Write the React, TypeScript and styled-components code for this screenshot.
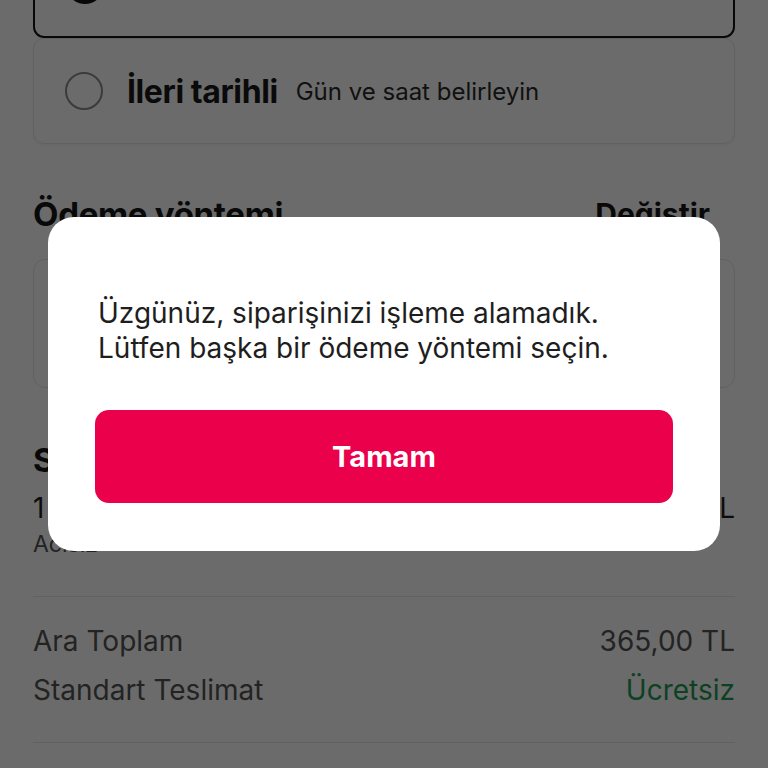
import React from 'react';
import styled, {createGlobalStyle} from 'styled-components';

const GlobalStyle = createGlobalStyle`
  html, body {
    margin: 0;
    padding: 0;
    background: #ffffff;
    font-family: Inter, 'Noto Sans', sans-serif;
  }
  #root {
    height: 768px;
    overflow: hidden;
  }
`;

type Option = {title: string; hint: string; selected: boolean};

const options: Option[] = [
  {title: 'Hemen', hint: 'En kısa sürede', selected: true},
  {title: 'İleri tarihli', hint: 'Gün ve saat belirleyin', selected: false},
];

const App: React.FC = () => {
  return (
    <>
      <GlobalStyle />
      <Page>
        <OptionGroup>
          {options.map(o => (
            <OptionRow key={o.title} $selected={o.selected}>
              <Radio $selected={o.selected} />
              <OptionTitle>{o.title}</OptionTitle>
              <OptionHint>{o.hint}</OptionHint>
            </OptionRow>
          ))}
        </OptionGroup>

        <SectionHeader>
          <SectionTitle>Ödeme yöntemi</SectionTitle>
          <LinkButton>Değiştir</LinkButton>
        </SectionHeader>
        <PaymentCard>
          <PaymentLabel>Kredi / Banka Kartı</PaymentLabel>
        </PaymentCard>

        <SummaryTitle>Sipariş özeti</SummaryTitle>
        <ItemRow>
          <ItemName>1 x Karışık Pizza</ItemName>
          <ItemName>365,00 TL</ItemName>
        </ItemRow>
        <ItemNote>Acısız</ItemNote>

        <Divider />
        <TotalsBlock>
          <TotalRow>
            <TotalLabel>Ara Toplam</TotalLabel>
            <TotalLabel>365,00 TL</TotalLabel>
          </TotalRow>
          <TotalRow>
            <TotalLabel>Standart Teslimat</TotalLabel>
            <FreeLabel>Ücretsiz</FreeLabel>
          </TotalRow>
        </TotalsBlock>
        <Divider />
      </Page>

      <Backdrop>
        <Dialog role="alertdialog">
          <Message>
            Üzgünüz, siparişinizi işleme alamadık.
            <br />
            Lütfen başka bir ödeme yöntemi seçin.
          </Message>
          <PrimaryButton>Tamam</PrimaryButton>
        </Dialog>
      </Backdrop>
    </>
  );
};

export default App;

const Page = styled.div`
  display: flex;
  flex-direction: column;
  padding: 0 33px;
  margin-top: -68px;
`;

const OptionGroup = styled.div`
  display: flex;
  flex-direction: column;
`;

const OptionRow = styled.div<{$selected: boolean}>`
  display: flex;
  align-items: center;
  gap: 24px;
  height: 106px;
  box-sizing: border-box;
  padding: 0 31px;
  border-radius: 11px;
  border: ${p => (p.$selected ? '2px solid #141414' : '1px solid #e6e6e6')};
  ${p => !p.$selected && 'box-shadow: 0 2px 3px rgba(0,0,0,0.04);'}
`;

const Radio = styled.span<{$selected: boolean}>`
  width: 38px;
  height: 38px;
  box-sizing: border-box;
  border-radius: 50%;
  flex-shrink: 0;
  border: ${p => (p.$selected ? '11px solid #141414' : '2.5px solid #8c8c8c')};
`;

const OptionTitle = styled.span`
  font-size: 32px;
  font-weight: 700;
  color: #1a1a1a;
  letter-spacing: -0.4px;
`;

const OptionHint = styled.span`
  font-size: 24px;
  color: #2a2a2a;
  margin-left: -6px;
`;

const SectionHeader = styled.div`
  display: flex;
  justify-content: space-between;
  align-items: center;
  margin-top: 50px;
  padding-right: 25px;
  height: 40px;
`;

const SectionTitle = styled.h2`
  margin: 0;
  font-size: 33px;
  font-weight: 700;
  color: #161616;
  letter-spacing: -0.3px;
`;

const LinkButton = styled.span`
  font-size: 30px;
  font-weight: 700;
  color: #161616;
`;

const PaymentCard = styled.div`
  margin-top: 25px;
  height: 127px;
  border: 1px solid #e6e6e6;
  border-radius: 12px;
  display: flex;
  align-items: center;
  padding: 0 30px;
`;

const PaymentLabel = styled.span`
  font-size: 26px;
  color: #222;
`;

const SummaryTitle = styled.h2`
  margin: 52px 0 0;
  font-size: 33px;
  line-height: 40px;
  font-weight: 700;
  color: #161616;
`;

const ItemRow = styled.div`
  display: flex;
  justify-content: space-between;
  margin-top: 10px;
`;

const ItemName = styled.span`
  font-size: 28px;
  line-height: 36px;
  color: #1e1e1e;
`;

const ItemNote = styled.span`
  font-size: 23px;
  line-height: 28px;
  color: #555;
  margin-top: 4px;
`;

const Divider = styled.hr`
  border: none;
  border-top: 1px solid #e8e8e8;
  margin: 38px 0 0;
  width: 100%;
`;

const TotalsBlock = styled.div`
  display: flex;
  flex-direction: column;
  gap: 13px;
  margin: 26px 0 -4px;
`;

const TotalRow = styled.div`
  display: flex;
  justify-content: space-between;
`;

const TotalLabel = styled.span`
  font-size: 28px;
  line-height: 36px;
  color: #555;
`;

const FreeLabel = styled(TotalLabel)`
  color: #1f9c57;
`;

const Backdrop = styled.div`
  position: fixed;
  inset: 0;
  background: rgba(0, 0, 0, 0.58);
  display: flex;
  align-items: center;
  justify-content: center;
`;

const Dialog = styled.div`
  width: 672px;
  box-sizing: border-box;
  background: #fff;
  border-radius: 26px;
  padding: 79px 47px 48px;
  display: flex;
  flex-direction: column;
`;

const Message = styled.p`
  margin: 0 0 44px 3px;
  font-size: 28px;
  line-height: 35px;
  color: #1e1e1e;
`;

const PrimaryButton = styled.button`
  height: 93px;
  border: none;
  border-radius: 14px;
  background: #eb004b;
  color: #fff;
  font-family: Inter, 'Noto Sans', sans-serif;
  font-size: 29px;
  font-weight: 700;
  cursor: pointer;
`;
